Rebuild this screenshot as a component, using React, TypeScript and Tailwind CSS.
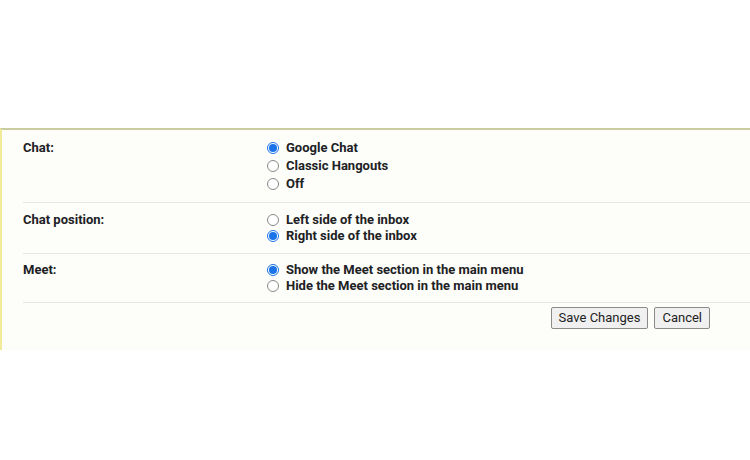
import React from "react";

function Radio({ checked }: { checked: boolean }) {
  return checked ? (
    <span className="w-[12px] h-[12px] rounded-full border border-[#1a73e8] bg-white flex items-center justify-center shrink-0">
      <span className="w-[8px] h-[8px] rounded-full bg-[#1a73e8]" />
    </span>
  ) : (
    <span className="w-[12px] h-[12px] rounded-full border border-[#8a8a8a] bg-white shrink-0" />
  );
}

function Option({ label, checked, h }: { label: string; checked: boolean; h: string }) {
  return (
    <div className={`flex items-center ${h}`}>
      <span className="w-[19px] flex justify-start">
        <Radio checked={checked} />
      </span>
      <span>{label}</span>
    </div>
  );
}

export default function App() {
  const font = { fontFamily: "Roboto, 'Liberation Sans', sans-serif" };
  return (
    <div className="w-[750px] h-[460px] bg-white" style={font}>
      <div className="h-[128px]" />
      <div className="h-[222px] bg-[#fdfdf9] border-t-2 border-t-[#c9cc9f] border-l-2 border-l-[#f2eb9a]">
        <div className="pl-[21px] text-[13px] font-bold text-[#202124]">
          <div className="flex border-b border-[#e6e6e2] pt-[9px] pb-[9px]">
            <div className="w-[244px] h-[18px] flex items-center">Chat:</div>
            <div className="flex flex-col">
              <Option label="Google Chat" checked h="h-[18px]" />
              <Option label="Classic Hangouts" checked={false} h="h-[18px]" />
              <Option label="Off" checked={false} h="h-[18px]" />
            </div>
          </div>
          <div className="flex border-b border-[#e6e6e2] pt-[9px] pb-[9px]">
            <div className="w-[244px] h-[16px] flex items-center">Chat position:</div>
            <div className="flex flex-col">
              <Option label="Left side of the inbox" checked={false} h="h-[16px]" />
              <Option label="Right side of the inbox" checked h="h-[16px]" />
            </div>
          </div>
          <div className="flex border-b border-[#e6e6e2] pt-[8px] pb-[8px]">
            <div className="w-[244px] h-[16px] flex items-center">Meet:</div>
            <div className="flex flex-col">
              <Option label="Show the Meet section in the main menu" checked h="h-[16px]" />
              <Option label="Hide the Meet section in the main menu" checked={false} h="h-[16px]" />
            </div>
          </div>
          <div className="flex justify-end gap-[6px] pt-[4px] pr-[40px] font-normal">
            <button className="h-[22px] px-[7px] text-[13px] text-[#222] bg-[#f0f0f0] border border-[#8a8a8a] rounded-[2px]">
              Save Changes
            </button>
            <button className="h-[22px] px-[7px] text-[13px] text-[#222] bg-[#f0f0f0] border border-[#8a8a8a] rounded-[2px]">
              Cancel
            </button>
          </div>
        </div>
      </div>
    </div>
  );
}
